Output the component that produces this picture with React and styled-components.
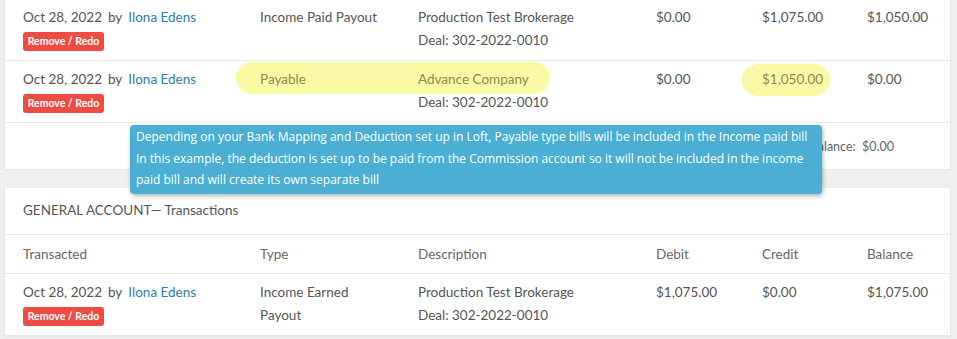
import React from "react";
import styled, { createGlobalStyle } from "styled-components";

const GlobalStyle = createGlobalStyle`
  html, body {
    margin: 0;
    padding: 0;
    background: #efefef;
    font-family: Lato, "Liberation Sans", sans-serif;
    color: #555;
  }
`;

const Page = styled.div`
  width: 957px;
  height: 339px;
  overflow: hidden;
  padding: 0 6px 0 4px;
  box-sizing: border-box;
  margin-top: -1px;
`;

const Card = styled.div`
  background: #fff;
  border: 1px solid #e6e6e6;
  border-top: none;
  margin-top: ${(p) => (p.gap ? "18px" : "0")};
`;

const Row = styled.div`
  position: relative;
  display: grid;
  grid-template-columns: 237px 158px 238px 106px 105px 1fr;
  padding: ${(p) => (p.head ? "8px 0 7px 18px" : "7px 0 8px 18px")};
  border-bottom: 1px solid #e8e8e8;
  font-size: 13.5px;
  line-height: 23px;
`;

const Cell = styled.div`
  position: relative;
  z-index: 1;
  padding-right: 30px;
  color: ${(p) => (p.marked ? "#8c8c52" : p.head ? "#666" : "#555")};
`;

const Mark = styled.div`
  position: absolute;
  z-index: 0;
  background: #fafaa4;
  border-radius: 16px;
  pointer-events: none;
`;

const DateLine = styled.div`
  white-space: nowrap;
`;

const By = styled.span`
  margin: 0 6px 0 6px;
`;

const Agent = styled.a`
  color: #2f7cae;
  text-decoration: none;
`;

const RedoButton = styled.button`
  display: block;
  margin-top: 3px;
  height: 19px;
  width: 81px;
  padding: 0;
  border: none;
  border-radius: 3px;
  background: #ef4b45;
  color: #fff;
  font-family: Lato, "Liberation Sans", sans-serif;
  font-size: 10.5px;
  font-weight: 700;
  line-height: 19px;
`;

const Footer = styled.div`
  position: relative;
  height: 46px;
  display: flex;
  align-items: center;
  justify-content: flex-end;
  padding-right: 56px;
  font-size: 12.5px;
  color: #666;
`;

const Tip = styled.div`
  position: absolute;
  top: 2px;
  left: 125px;
  width: 692px;
  box-sizing: border-box;
  padding: 1px 6px 3px;
  background: #4aafd3;
  border-radius: 4px;
  box-shadow: 1px 2px 4px rgba(0, 0, 0, 0.3);
  color: #fff;
  font-family: "Open Sans", "Liberation Sans", sans-serif;
  font-size: 12px;
  line-height: 21.5px;
  z-index: 5;
`;

const TipLine = styled.div`
  white-space: nowrap;
`;

const SectionTitle = styled.div`
  padding: 11px 18px 12px;
  border-bottom: 1px solid #e8e8e8;
  font-size: 13.5px;
  line-height: 23px;
  color: #555;
`;

function Entry({ type, desc, debit, credit, balance, marks }) {
  return (
    <Row>
      {marks &&
        marks.map((m, i) => (
          <Mark
            key={i}
            style={{ left: m.x, top: m.y, width: m.w, height: m.h }}
          />
        ))}
      <Cell>
        <DateLine>
          Oct 28, 2022<By>by</By>
          <Agent href="#">Ilona Edens</Agent>
        </DateLine>
        <RedoButton>Remove / Redo</RedoButton>
      </Cell>
      <Cell marked={type.marked}>{type.text}</Cell>
      <Cell>
        <Cell as="div" marked={desc.marked}>
          {desc.text}
        </Cell>
        <div>Deal: 302-2022-0010</div>
      </Cell>
      <Cell>{debit}</Cell>
      <Cell marked={credit.marked}>{credit.text}</Cell>
      <Cell>{balance}</Cell>
    </Row>
  );
}

export default function App() {
  return (
    <Page>
      <GlobalStyle />
      <Card>
        <Entry
          type={{ text: "Income Paid Payout" }}
          desc={{ text: "Production Test Brokerage" }}
          debit="$0.00"
          credit={{ text: "$1,075.00" }}
          balance="$1,050.00"
        />
        <Entry
          type={{ text: "Payable", marked: true }}
          desc={{ text: "Advance Company", marked: true }}
          debit="$0.00"
          credit={{ text: "$1,050.00", marked: true }}
          balance="$0.00"
          marks={[
            { x: 231, y: 1, w: 314, h: 32 },
            { x: 737, y: 3, w: 88, h: 32 },
          ]}
        />
        <Footer>
          Balance:&nbsp; $0.00
          <Tip>
            <TipLine>
              Depending on your Bank Mapping and Deduction set up in Loft,
              Payable type bills will be included in the Income paid bill
            </TipLine>
            <TipLine>
              In this example, the deduction is set up to be paid from the
              Commission account so it will not be included in the income
            </TipLine>
            <TipLine>paid bill and will create its own separate bill</TipLine>
          </Tip>
        </Footer>
      </Card>
      <Card gap>
        <SectionTitle>GENERAL ACCOUNT— Transactions</SectionTitle>
        <Row head>
          <Cell head>Transacted</Cell>
          <Cell head>Type</Cell>
          <Cell head>Description</Cell>
          <Cell head>Debit</Cell>
          <Cell head>Credit</Cell>
          <Cell head>Balance</Cell>
        </Row>
        <Entry
          type={{ text: "Income Earned Payout" }}
          desc={{ text: "Production Test Brokerage" }}
          debit="$1,075.00"
          credit={{ text: "$0.00" }}
          balance="$1,075.00"
        />
      </Card>
    </Page>
  );
}
